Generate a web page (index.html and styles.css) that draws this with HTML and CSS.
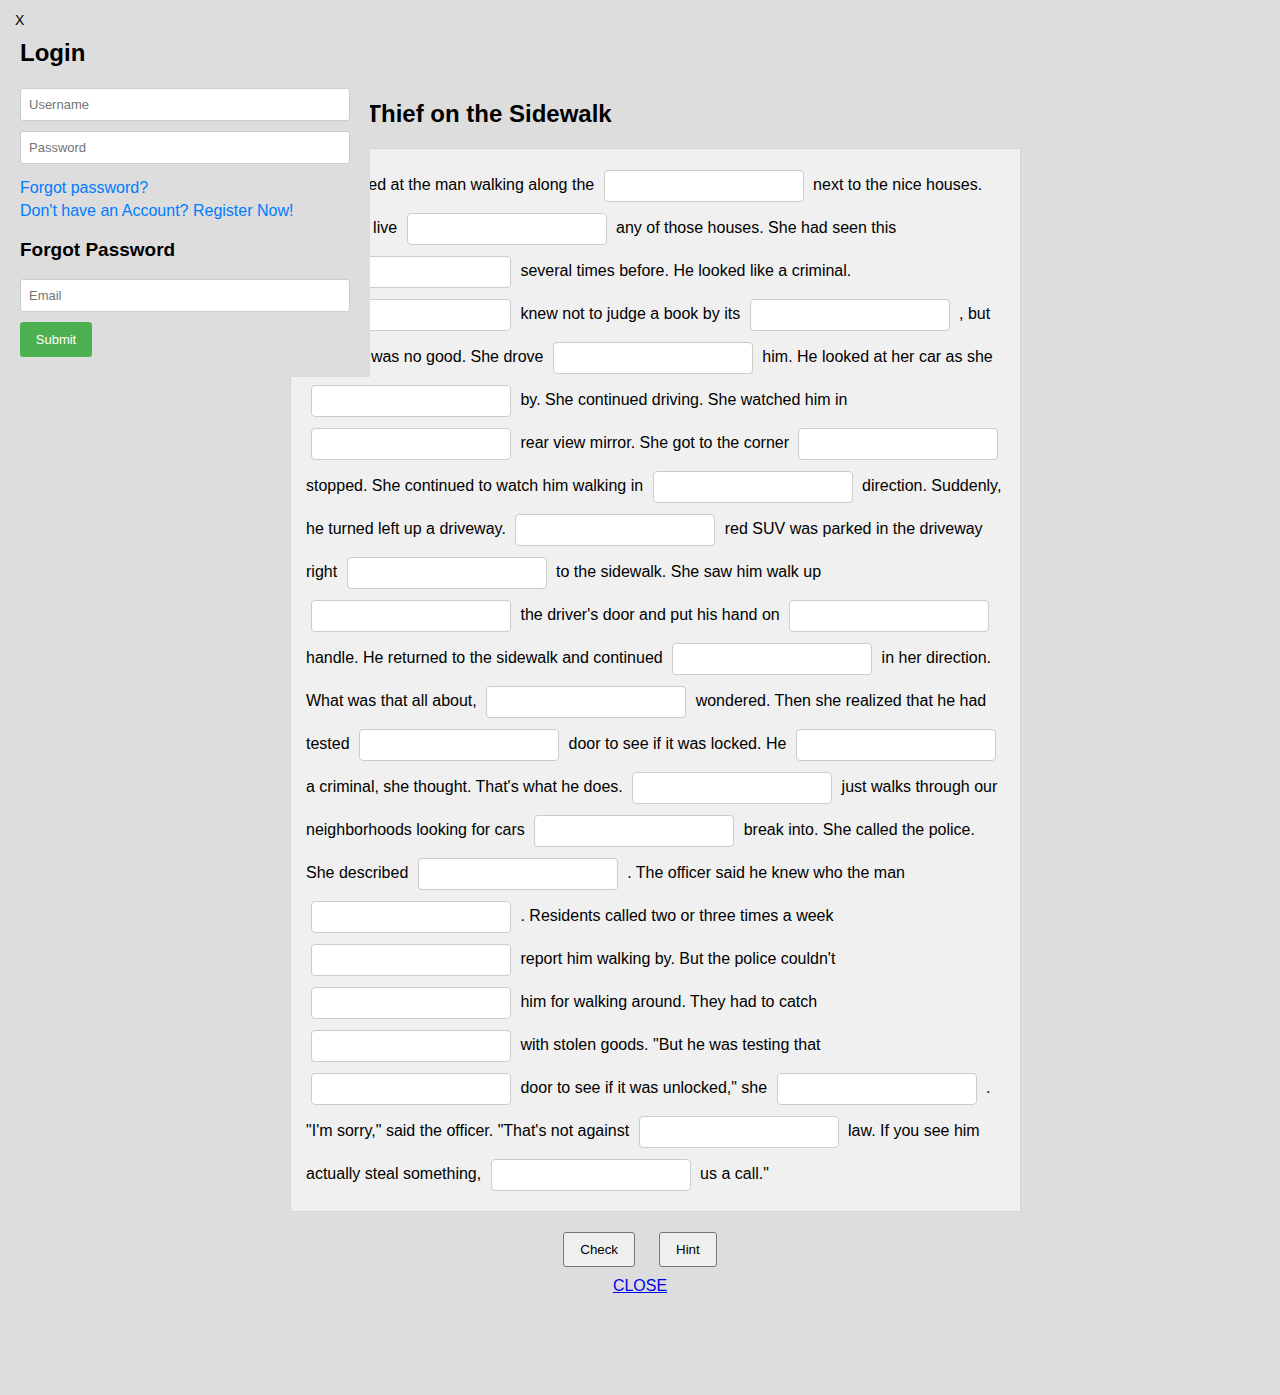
FILE: index.html
```html
<!DOCTYPE html>
<html>
<head>
<meta charset="utf-8">
<title>The Thief on the Sidewalk</title>
<link rel="stylesheet" href="styles.css">
</head>
<body>
<main class="page">
  <h2 class="story-title">The Thief on the Sidewalk</h2>
  <div class="story">She looked at the man walking along the <input class="blank" type="text"> next to the nice houses. He didn't live <input class="blank" type="text"> any of those houses. She had seen this <input class="blank" type="text"> several times before. He looked like a criminal. <input class="blank" type="text"> knew not to judge a book by its <input class="blank" type="text"> , but this man was no good. She drove <input class="blank" type="text"> him. He looked at her car as she <input class="blank" type="text"> by. She continued driving. She watched him in <input class="blank" type="text"> rear view mirror. She got to the corner <input class="blank" type="text"> stopped. She continued to watch him walking in <input class="blank" type="text"> direction. Suddenly, he turned left up a driveway. <input class="blank" type="text"> red SUV was parked in the driveway right <input class="blank" type="text"> to the sidewalk. She saw him walk up <input class="blank" type="text"> the driver's door and put his hand on <input class="blank" type="text"> handle. He returned to the sidewalk and continued <input class="blank" type="text"> in her direction. What was that all about, <input class="blank" type="text"> wondered. Then she realized that he had tested <input class="blank" type="text"> door to see if it was locked. He <input class="blank" type="text"> a criminal, she thought. That's what he does. <input class="blank" type="text"> just walks through our neighborhoods looking for cars <input class="blank" type="text"> break into. She called the police. She described <input class="blank" type="text"> . The officer said he knew who the man <input class="blank" type="text"> . Residents called two or three times a week <input class="blank" type="text"> report him walking by. But the police couldn't <input class="blank" type="text"> him for walking around. They had to catch <input class="blank" type="text"> with stolen goods. "But he was testing that <input class="blank" type="text"> door to see if it was unlocked," she <input class="blank" type="text"> . "I'm sorry," said the officer. "That's not against <input class="blank" type="text"> law. If you see him actually steal something, <input class="blank" type="text"> us a call."</div>
  <div class="actions">
    <button class="act-btn" type="button">Check</button>
    <button class="act-btn" type="button">Hint</button>
  </div>
  <div class="close-row"><a class="close-link" href="#">CLOSE</a></div>
</main>

<aside class="login-panel">
  <div class="panel-x">X</div>
  <h2 class="panel-title">Login</h2>
  <input class="field" type="text" placeholder="Username">
  <input class="field" type="password" placeholder="Password">
  <div class="links">
    <a class="blue-link" href="#">Forgot password?</a>
    <a class="blue-link" href="#">Don't have an Account? Register Now!</a>
  </div>
  <h3 class="panel-sub">Forgot Password</h3>
  <input class="field" type="text" placeholder="Email">
  <button class="submit-btn" type="button">Submit</button>
</aside>
</body>
</html>
```

FILE: styles.css
```css
html, body {
  margin: 0;
  padding: 0;
  background: #dddddd;
  font-family: "Liberation Sans", Arial, Helvetica, sans-serif;
  color: #000;
}

body {
  min-height: 1395px;
}

.page {
  padding-left: 290px;
  padding-top: 100px;
  width: 731px;
}

.story-title {
  font-size: 24px;
  line-height: 28px;
  font-weight: bold;
  margin: 0 0 20px 27px;
}

.story {
  background: #f0f0f0;
  border: 1px solid #d4d4d4;
  padding: 14px 15px 16px;
  font-size: 16px;
  line-height: 43px;
}

.blank {
  display: inline-block;
  box-sizing: border-box;
  width: 200px;
  height: 32px;
  margin: 0 5px;
  padding: 0 8px;
  border: 1px solid #cccccc;
  border-radius: 4px;
  background: #fff;
  vertical-align: middle;
  font-family: inherit;
  font-size: 14px;
}

.actions {
  display: flex;
  justify-content: center;
  gap: 24px;
  margin-top: 20px;
  margin-left: -290px;
  width: 1280px;
}

.act-btn {
  box-sizing: border-box;
  height: 35px;
  padding: 0 16px;
  font-family: "Liberation Sans", Arial, sans-serif;
  font-size: 13.333px;
  color: #000;
  background: #efefef;
  border: 1px solid #767676;
  border-radius: 3px;
}

.close-row {
  margin-left: -290px;
  width: 1280px;
  text-align: center;
  margin-top: 10px;
  font-size: 16px;
  line-height: 18px;
}

.close-link {
  color: #0000ee;
}

.login-panel {
  position: absolute;
  top: 0;
  left: 0;
  width: 370px;
  height: 377px;
  box-sizing: border-box;
  padding: 0 20px;
  background: #dddddd;
  display: flex;
  flex-direction: column;
  align-items: flex-start;
}

.panel-x {
  font-size: 14px;
  line-height: 16px;
  margin: 12px 0 0 -5px;
}

.panel-title {
  font-size: 24px;
  line-height: 28px;
  margin: 11px 0 21px;
}

.field {
  box-sizing: border-box;
  width: 330px;
  height: 33px;
  padding: 0 8px;
  border: 1px solid #cccccc;
  border-radius: 3px;
  background: #fff;
  font-family: "Liberation Sans", Arial, sans-serif;
  font-size: 13px;
  margin: 0 0 10px;
}

.field::placeholder {
  color: #757575;
}

.links {
  display: flex;
  flex-direction: column;
  font-size: 16px;
  line-height: 23px;
  margin-top: 2px;
}

.blue-link {
  color: #007bff;
  text-decoration: none;
}

.panel-sub {
  font-size: 19px;
  line-height: 22px;
  margin: 17px 0 18px;
}

.submit-btn {
  box-sizing: border-box;
  width: 72px;
  height: 35px;
  border: none;
  border-radius: 3px;
  background: #4caf50;
  color: #fff;
  font-family: "Liberation Sans", Arial, sans-serif;
  font-size: 13px;
  margin-top: 0;
}
```
